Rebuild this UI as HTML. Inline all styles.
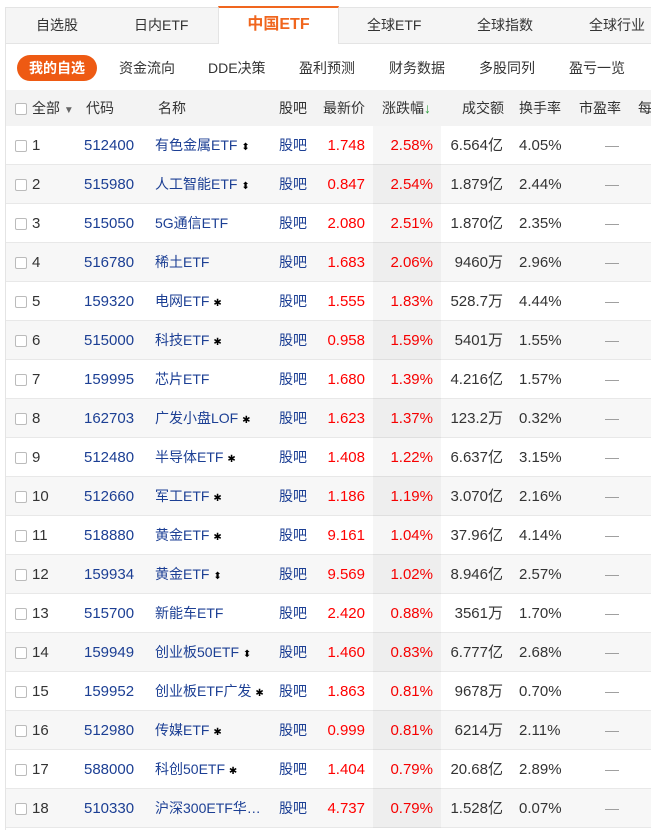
<!DOCTYPE html>
<html><head><meta charset="utf-8"><style>
*{margin:0;padding:0;box-sizing:border-box}
body{width:651px;height:830px;overflow:hidden;background:#fff;font-family:"Liberation Sans","Noto Sans CJK SC",sans-serif;font-size:14px;color:#333;position:relative}
.tabs{position:absolute;left:5px;top:7px;width:646px;height:37px;background:#f5f5f5;border-top:1px solid #e4e4e4;border-bottom:1px solid #e4e4e4;border-left:1px solid #e4e4e4}
.tab{position:absolute;top:0;line-height:35px;font-size:14px;color:#333}
.act{position:absolute;left:212px;top:-2px;width:121px;height:38px;background:#fff;border-top:2px solid #f0661e;border-left:1px solid #e4e4e4;border-right:1px solid #e4e4e4;color:#f0661e;font-size:16px;font-weight:bold;text-align:center;line-height:34px}
.sub{position:absolute;top:55px;line-height:26px;font-size:14px;color:#333}
.pill{position:absolute;left:17px;top:55px;width:80px;height:26px;border-radius:13px;background:#ee5a13;color:#fff;font-weight:bold;text-align:center;line-height:26px;font-size:14px}
.lb{position:absolute;left:5px;top:44px;width:1px;height:786px;background:#e4e4e4}
.hd{position:absolute;left:6px;top:90px;width:645px;height:36px;background:#f3f3f3}
.hd .c{line-height:36px;top:0}
.c{position:absolute;white-space:nowrap;top:0;line-height:39px;font-size:15px}
.hd .c{font-size:14px}
.row{position:absolute;left:6px;width:645px;height:39px;border-bottom:1px solid #e8e8e8}
.sort{position:absolute;left:373px;top:126px;width:68px;height:702px;background:rgba(0,0,0,0.035)}
.cb{position:absolute;left:9px;width:12px;height:12px;border:1px solid #bbb;border-radius:2px;background:#fff}
.b{color:#1c3f94}.r{color:#f00}
.ic{color:#000;font-size:10px}
</style></head><body>
<div class="tabs">
<span class="tab" style="left:30px">自选股</span>
<span class="tab" style="left:128px">日内ETF</span>
<div class="act">中国ETF</div>
<span class="tab" style="left:361px">全球ETF</span>
<span class="tab" style="left:471px">全球指数</span>
<span class="tab" style="left:583px">全球行业</span>
</div>
<div class="lb"></div>
<div class="pill">我的自选</div>
<span class="sub" style="left:119px">资金流向</span>
<span class="sub" style="left:208px">DDE决策</span>
<span class="sub" style="left:299px">盈利预测</span>
<span class="sub" style="left:389px">财务数据</span>
<span class="sub" style="left:479px">多股同列</span>
<span class="sub" style="left:569px">盈亏一览</span>
<div class="hd">
<div class="cb" style="top:13px"></div>
<span class="c" style="left:26px">全部 <span style="font-size:10px;color:#666">▼</span></span>
<span class="c" style="left:80px">代码</span>
<span class="c" style="left:152px">名称</span>
<span class="c" style="left:273px">股吧</span>
<span class="c" style="left:317px">最新价</span>
<span class="c" style="left:376px">涨跌幅<span style="color:#2a9d3a">↓</span></span>
<span class="c" style="left:456px">成交额</span>
<span class="c" style="left:513px">换手率</span>
<span class="c" style="left:573px">市盈率</span>
<span class="c" style="left:632px">每</span>
</div>
<div id="rows"></div>
<div class="sort"></div>
<script>
var d=[["512400","有色金属ETF","⬍","1.748","2.58%","6.564亿","4.05%"],
["515980","人工智能ETF","⬍","0.847","2.54%","1.879亿","2.44%"],
["515050","5G通信ETF","","2.080","2.51%","1.870亿","2.35%"],
["516780","稀土ETF","","1.683","2.06%","9460万","2.96%"],
["159320","电网ETF","✱","1.555","1.83%","528.7万","4.44%"],
["515000","科技ETF","✱","0.958","1.59%","5401万","1.55%"],
["159995","芯片ETF","","1.680","1.39%","4.216亿","1.57%"],
["162703","广发小盘LOF","✱","1.623","1.37%","123.2万","0.32%"],
["512480","半导体ETF","✱","1.408","1.22%","6.637亿","3.15%"],
["512660","军工ETF","✱","1.186","1.19%","3.070亿","2.16%"],
["518880","黄金ETF","✱","9.161","1.04%","37.96亿","4.14%"],
["159934","黄金ETF","⬍","9.569","1.02%","8.946亿","2.57%"],
["515700","新能车ETF","","2.420","0.88%","3561万","1.70%"],
["159949","创业板50ETF","⬍","1.460","0.83%","6.777亿","2.68%"],
["159952","创业板ETF广发","✱","1.863","0.81%","9678万","0.70%"],
["512980","传媒ETF","✱","0.999","0.81%","6214万","2.11%"],
["588000","科创50ETF","✱","1.404","0.79%","20.68亿","2.89%"],
["510330","沪深300ETF华…","","4.737","0.79%","1.528亿","0.07%"]];
var h="";
d.forEach(function(x,i){var t=126+i*39;
h+='<div class="row" style="top:'+t+'px;background:'+(i%2?'#f7f7f7':'#fff')+'">'+
'<div class="cb" style="top:14px"></div>'+
'<span class="c" style="left:26px">'+(i+1)+'</span>'+
'<span class="c b" style="left:78px">'+x[0]+'</span>'+
'<span class="c b" style="left:149px;font-size:14px">'+x[1]+(x[2]?' <span class="ic">'+x[2]+'</span>':'')+'</span>'+
'<span class="c b" style="left:273px;font-size:14px">股吧</span>'+
'<span class="c r" style="right:286px">'+x[3]+'</span>'+
'<span class="c r" style="right:218px">'+x[4]+'</span>'+
'<span class="c" style="right:148px">'+x[5]+'</span>'+
'<span class="c" style="left:513px">'+x[6]+'</span>'+
'<span class="c" style="left:599px;color:#999;font-size:14px">—</span></div>';});
document.getElementById("rows").innerHTML=h;
</script>
</body></html>
